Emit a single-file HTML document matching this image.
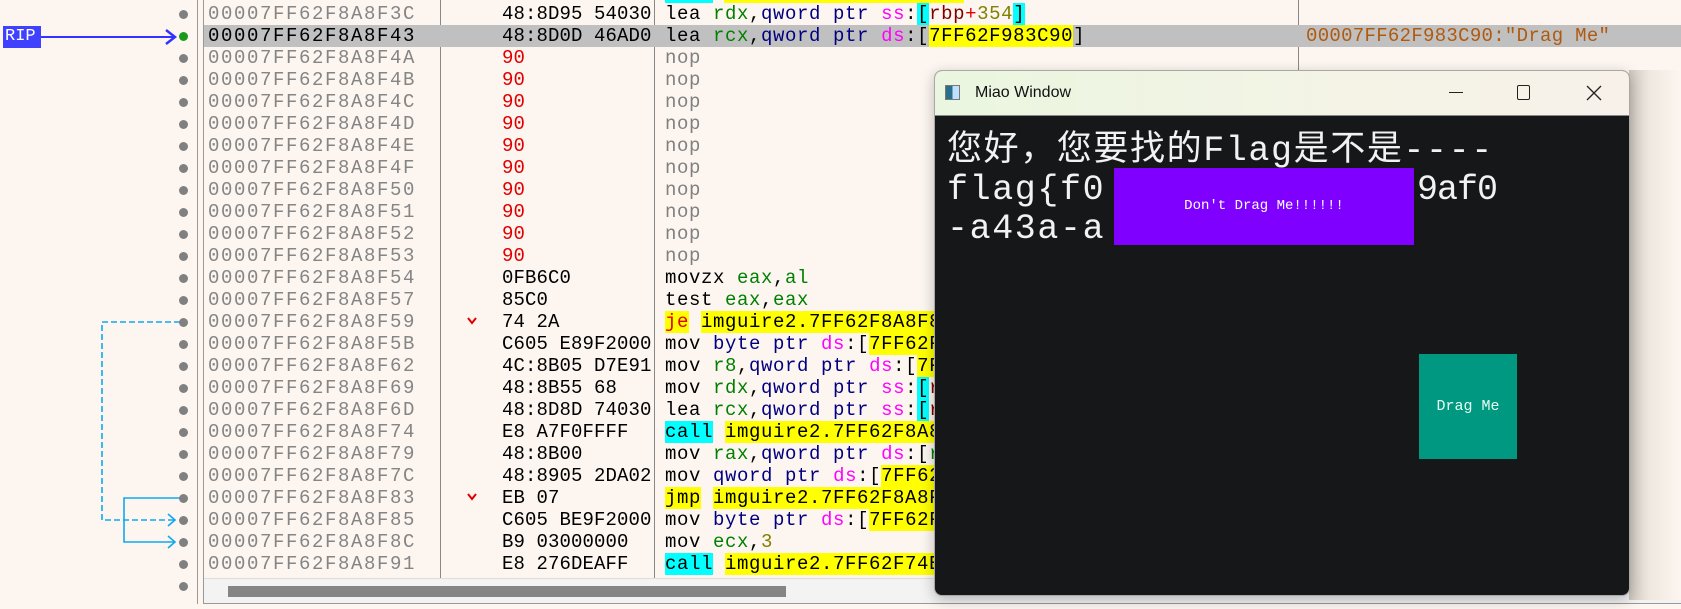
<!DOCTYPE html>
<html><head><meta charset="utf-8"><style>
*{margin:0;padding:0;box-sizing:border-box}
body{width:1681px;height:609px;overflow:hidden;background:#fdf6f0;position:relative;font-family:"Liberation Mono",monospace;font-size:19px}
.row{position:absolute;left:208px;width:1473px;height:22px;line-height:22px;white-space:pre}
.a{position:absolute;left:0;color:#858585;letter-spacing:1.6px}
.b{position:absolute;left:294px;color:#000;letter-spacing:.1px}
.d{position:absolute;left:457px;color:#000;letter-spacing:.6px}
.r{color:#008000}.p{color:#000080}.s{color:#ff00ff}.y{background:#ffff00}.c{background:#00ffff}.n{color:#808000}.rd{color:#e00000}.br{color:#800000}.g{color:#808080}
.dot{position:absolute;left:179px;width:9px;height:9px;border-radius:50%;background:#808080}
.vl{position:absolute;top:0;width:1px;height:579px;background:#888}
.mk{position:absolute;left:468px;color:#e00000;font-size:18px;font-weight:bold}
</style></head><body>
<div style="position:absolute;left:197px;top:0;width:1px;height:604px;background:#999"></div>
<div style="position:absolute;left:203px;top:0;width:1px;height:604px;background:#999"></div>
<div class="vl" style="left:440px"></div>
<div class="vl" style="left:654px"></div>
<div class="vl" style="left:1298px"></div>
<div style="position:absolute;left:665px;top:0;width:48px;height:3px;background:#00ffff"></div>
<div style="position:absolute;left:724px;top:0;width:240px;height:3px;background:#ffff00"></div>
<div style="position:absolute;left:204px;top:25px;width:1477px;height:22px;background:#c0c0c0"></div>
<div style="position:absolute;left:3px;top:26px;width:38px;height:22px;background:#4040ff;color:#fff;font-size:17px;line-height:22px;padding-left:2px">RIP</div>
<div style="position:absolute;left:41px;top:36px;width:134px;height:2px;background:#3333ff"></div>
<svg style="position:absolute;left:160px;top:28px" width="20" height="18"><path d="M6 2 L15 9 L6 16" fill="none" stroke="#3333ff" stroke-width="2.5"/></svg>
<svg style="position:absolute;left:0;top:0" width="200" height="609">
<path d="M180 322 H102 V520 H174" fill="none" stroke="#10a8f0" stroke-width="1.6" stroke-dasharray="6,3"/>
<path d="M168 514 L175 520 L168 526" fill="none" stroke="#10a8f0" stroke-width="1.6"/>
<path d="M180 498 H124 V542 H174" fill="none" stroke="#10a8f0" stroke-width="1.6"/>
<path d="M168 536 L175 542 L168 548" fill="none" stroke="#10a8f0" stroke-width="1.6"/>
</svg>
<div class="dot" style="top:10px"></div><div class="dot" style="top:32px;background:#1a9a1a"></div>
<div class="dot" style="top:54px"></div><div class="dot" style="top:76px"></div><div class="dot" style="top:98px"></div><div class="dot" style="top:120px"></div><div class="dot" style="top:142px"></div><div class="dot" style="top:164px"></div><div class="dot" style="top:186px"></div><div class="dot" style="top:208px"></div><div class="dot" style="top:230px"></div><div class="dot" style="top:252px"></div><div class="dot" style="top:274px"></div><div class="dot" style="top:296px"></div><div class="dot" style="top:318px"></div><div class="dot" style="top:340px"></div><div class="dot" style="top:362px"></div><div class="dot" style="top:384px"></div><div class="dot" style="top:406px"></div><div class="dot" style="top:428px"></div><div class="dot" style="top:450px"></div><div class="dot" style="top:472px"></div><div class="dot" style="top:494px"></div><div class="dot" style="top:516px"></div><div class="dot" style="top:538px"></div><div class="dot" style="top:560px"></div><div class="dot" style="top:582px"></div>
<svg style="position:absolute;left:466px;top:316px" width="12" height="10"><path d="M2 2 L6 7 L10 2" fill="none" stroke="#e00000" stroke-width="2"/></svg>
<svg style="position:absolute;left:466px;top:492px" width="12" height="10"><path d="M2 2 L6 7 L10 2" fill="none" stroke="#e00000" stroke-width="2"/></svg>

<div class="row" style="top:3px"><span class="a">00007FF62F8A8F3C</span><span class="b">48:8D95 54030</span><span class="d">lea <span class="r">rdx</span>,<span class="p">qword ptr</span> <span class="s">ss</span>:<span class="c">[</span><span class="br">rbp</span><span class="rd">+</span><span class="n">354</span><span class="c">]</span></span></div>
<div class="row" style="top:25px"><span class="a" style="color:#000">00007FF62F8A8F43</span><span class="b">48:8D0D 46AD0</span><span class="d">lea <span class="r">rcx</span>,<span class="p">qword ptr</span> <span class="s">ds</span>:[<span class="y">7FF62F983C90</span>]</span><span style="position:absolute;left:1098px;color:#b05a10;letter-spacing:.3px">00007FF62F983C90:"Drag Me"</span></div>
<div class="row" style="top:47px"><span class="a">00007FF62F8A8F4A</span><span class="b rd">90</span><span class="d g">nop</span></div>
<div class="row" style="top:69px"><span class="a">00007FF62F8A8F4B</span><span class="b rd">90</span><span class="d g">nop</span></div>
<div class="row" style="top:91px"><span class="a">00007FF62F8A8F4C</span><span class="b rd">90</span><span class="d g">nop</span></div>
<div class="row" style="top:113px"><span class="a">00007FF62F8A8F4D</span><span class="b rd">90</span><span class="d g">nop</span></div>
<div class="row" style="top:135px"><span class="a">00007FF62F8A8F4E</span><span class="b rd">90</span><span class="d g">nop</span></div>
<div class="row" style="top:157px"><span class="a">00007FF62F8A8F4F</span><span class="b rd">90</span><span class="d g">nop</span></div>
<div class="row" style="top:179px"><span class="a">00007FF62F8A8F50</span><span class="b rd">90</span><span class="d g">nop</span></div>
<div class="row" style="top:201px"><span class="a">00007FF62F8A8F51</span><span class="b rd">90</span><span class="d g">nop</span></div>
<div class="row" style="top:223px"><span class="a">00007FF62F8A8F52</span><span class="b rd">90</span><span class="d g">nop</span></div>
<div class="row" style="top:245px"><span class="a">00007FF62F8A8F53</span><span class="b rd">90</span><span class="d g">nop</span></div>
<div class="row" style="top:267px"><span class="a">00007FF62F8A8F54</span><span class="b">0FB6C0</span><span class="d">movzx <span class="r">eax</span>,<span class="r">al</span></span></div>
<div class="row" style="top:289px"><span class="a">00007FF62F8A8F57</span><span class="b">85C0</span><span class="d">test <span class="r">eax</span>,<span class="r">eax</span></span></div>
<div class="row" style="top:311px"><span class="a">00007FF62F8A8F59</span><span class="b">74 2A</span><span class="d"><span class="y rd">je</span> <span class="y">imguire2.7FF62F8A8F85</span></span></div>
<div class="row" style="top:333px"><span class="a">00007FF62F8A8F5B</span><span class="b">C605 E89F2000</span><span class="d">mov <span class="p">byte ptr</span> <span class="s">ds</span>:[<span class="y">7FF62F9</span></span></div>
<div class="row" style="top:355px"><span class="a">00007FF62F8A8F62</span><span class="b">4C:8B05 D7E91</span><span class="d">mov <span class="r">r8</span>,<span class="p">qword ptr</span> <span class="s">ds</span>:[<span class="y">7FF6</span></span></div>
<div class="row" style="top:377px"><span class="a">00007FF62F8A8F69</span><span class="b">48:8B55 68</span><span class="d">mov <span class="r">rdx</span>,<span class="p">qword ptr</span> <span class="s">ss</span>:<span class="c">[</span><span class="br">rbp</span></span></div>
<div class="row" style="top:399px"><span class="a">00007FF62F8A8F6D</span><span class="b">48:8D8D 74030</span><span class="d">lea <span class="r">rcx</span>,<span class="p">qword ptr</span> <span class="s">ss</span>:<span class="c">[</span><span class="br">rbp</span></span></div>
<div class="row" style="top:421px"><span class="a">00007FF62F8A8F74</span><span class="b">E8 A7F0FFFF</span><span class="d"><span class="c">call</span> <span class="y">imguire2.7FF62F8A8</span></span></div>
<div class="row" style="top:443px"><span class="a">00007FF62F8A8F79</span><span class="b">48:8B00</span><span class="d">mov <span class="r">rax</span>,<span class="p">qword ptr</span> <span class="s">ds</span>:[<span class="r">rax</span></span></div>
<div class="row" style="top:465px"><span class="a">00007FF62F8A8F7C</span><span class="b">48:8905 2DA02</span><span class="d">mov <span class="p">qword ptr</span> <span class="s">ds</span>:[<span class="y">7FF62F9</span></span></div>
<div class="row" style="top:487px"><span class="a">00007FF62F8A8F83</span><span class="b">EB 07</span><span class="d"><span class="y">jmp</span> <span class="y">imguire2.7FF62F8A8F8C</span></span></div>
<div class="row" style="top:509px"><span class="a">00007FF62F8A8F85</span><span class="b">C605 BE9F2000</span><span class="d">mov <span class="p">byte ptr</span> <span class="s">ds</span>:[<span class="y">7FF62F9</span></span></div>
<div class="row" style="top:531px"><span class="a">00007FF62F8A8F8C</span><span class="b">B9 03000000</span><span class="d">mov <span class="r">ecx</span>,<span class="n">3</span></span></div>
<div class="row" style="top:553px"><span class="a">00007FF62F8A8F91</span><span class="b">E8 276DEAFF</span><span class="d"><span class="c">call</span> <span class="y">imguire2.7FF62F74E</span></span></div>
<div style="position:absolute;left:204px;top:578px;width:1477px;height:26px;background:#f3f3f3;border-top:1px solid #ddd;border-bottom:1px solid #999"></div>
<div style="position:absolute;left:228px;top:586px;width:558px;height:11px;background:#858585"></div>
<div style="position:absolute;left:1629px;top:70px;width:52px;height:530px;background:linear-gradient(90deg,#cfc8c0,#efe8e0 40%,#fdf6f0)"></div>
<div style="position:absolute;left:934px;top:70px;width:696px;height:526px;border:1px solid #a8a8a8;border-radius:8px;overflow:hidden;background:#161719;box-shadow:0 4px 14px rgba(0,0,0,.25);z-index:5">
 <div style="position:absolute;left:0;top:0;width:100%;height:45px;background:linear-gradient(90deg,#eaf6df,#f4f3e6 60%,#f7f1ea);border-bottom:1px solid #888"></div>
 <div style="position:absolute;left:10px;top:14px;width:15px;height:15px;border:1px solid #777;background:linear-gradient(90deg,#2a6f8a 50%,#bfe0ff 50%)"></div>
 <div style="position:absolute;left:40px;top:13px;font:16px 'Liberation Sans',sans-serif;color:#111">Miao Window</div>
 <div style="position:absolute;left:514px;top:21px;width:14px;height:1px;background:#222"></div>
 <div style="position:absolute;left:582px;top:14px;width:13px;height:15px;border:1.5px solid #222;border-radius:2px"></div>
 <svg style="position:absolute;left:651px;top:14px" width="16" height="16"><path d="M1 1 L15 15 M15 1 L1 15" stroke="#222" stroke-width="1.3"/></svg>
 <div style="position:absolute;left:12px;top:61px;color:#f2f2f2;font:35px/39px 'Liberation Mono','Noto Sans CJK SC',monospace;letter-spacing:1.6px;white-space:pre">您好，您要找的Flag是不是----
flag{f0
-a43a-a</div>
 <div style="position:absolute;left:482px;top:100px;color:#f2f2f2;font:35px/39px 'Liberation Mono',monospace;letter-spacing:-1px">9af0</div>
 <div style="position:absolute;left:179px;top:97px;width:300px;height:77px;background:#8000ff;color:#fff;font:14px/77px 'Liberation Mono',monospace;text-align:center">Don't Drag Me!!!!!!</div>
 <div style="position:absolute;left:484px;top:283px;width:98px;height:105px;background:#009880;color:#e8fff4;font:15px/105px 'Liberation Mono',monospace;text-align:center">Drag Me</div>
</div>
</body></html>
